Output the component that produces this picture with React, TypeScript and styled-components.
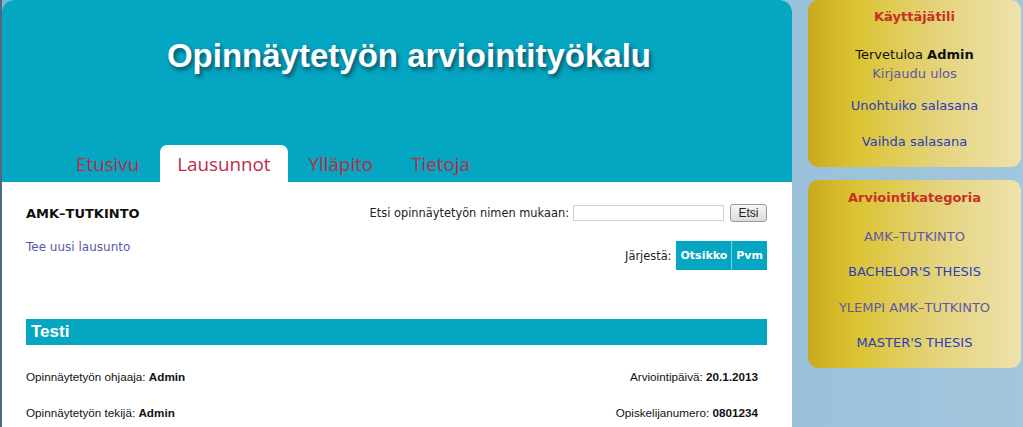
import React from 'react';
import styled, { createGlobalStyle } from 'styled-components';

const teal = '#04a6c2';
const crimson = '#bc2c44';
const uiFont = `"DejaVu Sans", Verdana, sans-serif`;
const arial = `"Liberation Sans", Arial, sans-serif`;

const GlobalStyle = createGlobalStyle`
  html, body {
    margin: 0;
    padding: 0;
  }
  body {
    background: linear-gradient(90deg, #4e6a80 0, #4e6a80 2px, #7fb2d1 2px, #a2c6dc 100%);
    font-family: ${uiFont};
    overflow: hidden;
  }
`;

const Page = styled.div`
  display: flex;
  gap: 16px;
  padding-left: 2px;
  height: 427px;
`;

const Main = styled.main`
  width: 790px;
  display: flex;
  flex-direction: column;
  background: #fff;
  border-radius: 12px 12px 0 0;
`;

const Header = styled.header`
  height: 182px;
  background: ${teal};
  border-radius: 12px 12px 0 0;
  display: flex;
  flex-direction: column;
  justify-content: space-between;
`;

const Title = styled.h1`
  margin: 0;
  padding: 37px 0 0 24px;
  text-align: center;
  font-family: ${arial};
  font-weight: bold;
  font-size: 33px;
  line-height: 38px;
  color: #fff;
  text-shadow: 2px 3px 4px rgba(20, 50, 70, 0.75);
`;

const Tabs = styled.nav`
  display: flex;
  gap: 4px;
  padding-left: 57px;
`;

const Tab = styled.a<{ $active?: boolean }>`
  display: flex;
  align-items: center;
  height: 37px;
  padding: 0 17px;
  border-radius: 7px 7px 0 0;
  background: ${(p) => (p.$active ? '#fff' : 'transparent')};
  color: ${crimson};
  font-family: "Open Sans", ${uiFont};
  font-size: 18.8px;
  font-weight: 500;
  text-decoration: none;
  cursor: pointer;
`;

const Content = styled.section`
  padding: 22px 25px 0 24px;
  display: flex;
  flex-direction: column;
`;

const Row = styled.div`
  display: flex;
  justify-content: space-between;
  align-items: center;
`;

const Degree = styled.h2`
  margin: 0;
  font-size: 13px;
  font-weight: bold;
  color: #111;
`;

const SearchForm = styled.form`
  display: flex;
  align-items: center;
  font-size: 11.4px;
  color: #222;
`;

const SearchInput = styled.input`
  width: 145px;
  height: 12px;
  margin: 0 6px 0 4px;
  padding: 1px 2px;
  border: 1px solid #cfcfcf;
`;

const SearchButton = styled.button`
  height: 18px;
  width: 37px;
  padding: 0;
  font-family: ${arial};
  font-size: 12px;
  color: #222;
  border: 1px solid #9a9a9a;
  border-radius: 3px;
  background: linear-gradient(#f6f6f6, #dcdcdc);
`;

const NewLink = styled.a`
  font-size: 12px;
  color: #5a5aa8;
  text-decoration: none;
  align-self: flex-start;
  margin-top: 18px;
`;

const SortRow = styled(Row)`
  margin-top: -13px;
  align-self: flex-end;
`;

const SortLabel = styled.span`
  font-size: 11.4px;
  color: #222;
  margin-right: 5px;
`;

const SortButton = styled.a<{ $last?: boolean }>`
  display: flex;
  align-items: center;
  height: 29px;
  padding: 0 4px;
  background: ${teal};
  color: #fff;
  font-size: 11px;
  font-weight: bold;
  text-decoration: none;
  border-right: ${(p) => (p.$last ? 'none' : '1px solid #7fd0dd')};
`;

const ItemBar = styled.h3`
  margin: 49px 0 0;
  height: 26px;
  padding-left: 5px;
  background: ${teal};
  color: #fff;
  font-family: ${arial};
  font-size: 17px;
  font-weight: bold;
  line-height: 26px;
`;

const InfoRow = styled(Row)<{ $first?: boolean }>`
  margin-top: ${(p) => (p.$first ? '25px' : '22px')};
  padding-right: 9px;
  font-family: ${arial};
  font-size: 11.7px;
  line-height: 14px;
  color: #111;
`;

const Sidebar = styled.aside`
  width: 213px;
  display: flex;
  flex-direction: column;
  gap: 13px;
`;

const Box = styled.div<{ $pad: string }>`
  display: flex;
  flex-direction: column;
  align-items: center;
  padding: ${(p) => p.$pad};
  border-radius: 10px;
  background: linear-gradient(90deg, #c7aa1c 0%, #dcc332 22%, #e4d37a 60%, #eee2ac 100%);
  font-size: 13px;
  line-height: 19px;
`;

const BoxTitle = styled.h4`
  margin: 0;
  font-size: 13px;
  font-weight: bold;
  line-height: 18px;
  color: #c63026;
`;

const Welcome = styled.div`
  display: flex;
  flex-direction: column;
  align-items: center;
  margin-top: 19px;
  color: #111;
`;

const SideLink = styled.a<{ $visited?: boolean; $mt: number }>`
  margin-top: ${(p) => p.$mt}px;
  color: ${(p) => (p.$visited ? '#5e57a4' : '#2b3dbb')};
  text-decoration: none;
  white-space: nowrap;
`;

export default function App() {
  return (
    <>
      <GlobalStyle />
      <Page>
        <Main>
          <Header>
            <Title>Opinnäytetyön arviointityökalu</Title>
            <Tabs>
              <Tab>Etusivu</Tab>
              <Tab $active>Lausunnot</Tab>
              <Tab>Ylläpito</Tab>
              <Tab>Tietoja</Tab>
            </Tabs>
          </Header>
          <Content>
            <Row>
              <Degree>AMK–TUTKINTO</Degree>
              <SearchForm onSubmit={(e) => e.preventDefault()}>
                Etsi opinnäytetyön nimen mukaan:
                <SearchInput type="text" />
                <SearchButton type="submit">Etsi</SearchButton>
              </SearchForm>
            </Row>
            <NewLink>Tee uusi lausunto</NewLink>
            <SortRow>
              <SortLabel>Järjestä:</SortLabel>
              <SortButton>Otsikko</SortButton>
              <SortButton $last>Pvm</SortButton>
            </SortRow>
            <ItemBar>Testi</ItemBar>
            <InfoRow $first>
              <span>
                Opinnäytetyön ohjaaja: <b>Admin</b>
              </span>
              <span>
                Arviointipäivä: <b>20.1.2013</b>
              </span>
            </InfoRow>
            <InfoRow>
              <span>
                Opinnäytetyön tekijä: <b>Admin</b>
              </span>
              <span>
                Opiskelijanumero: <b>0801234</b>
              </span>
            </InfoRow>
          </Content>
        </Main>
        <Sidebar>
          <Box $pad="8px 0 16px">
            <BoxTitle>Käyttäjätili</BoxTitle>
            <Welcome>
              <span>
                Tervetuloa <b>Admin</b>
              </span>
              <SideLink $visited $mt={0}>
                Kirjaudu ulos
              </SideLink>
            </Welcome>
            <SideLink $mt={13}>Unohtuiko salasana</SideLink>
            <SideLink $mt={17}>Vaihda salasana</SideLink>
          </Box>
          <Box $pad="9px 0 16px">
            <BoxTitle>Arviointikategoria</BoxTitle>
            <SideLink $visited $mt={20}>
              AMK–TUTKINTO
            </SideLink>
            <SideLink $mt={16}>BACHELOR'S THESIS</SideLink>
            <SideLink $visited $mt={17}>
              YLEMPI AMK–TUTKINTO
            </SideLink>
            <SideLink $mt={16}>MASTER'S THESIS</SideLink>
          </Box>
        </Sidebar>
      </Page>
    </>
  );
}
